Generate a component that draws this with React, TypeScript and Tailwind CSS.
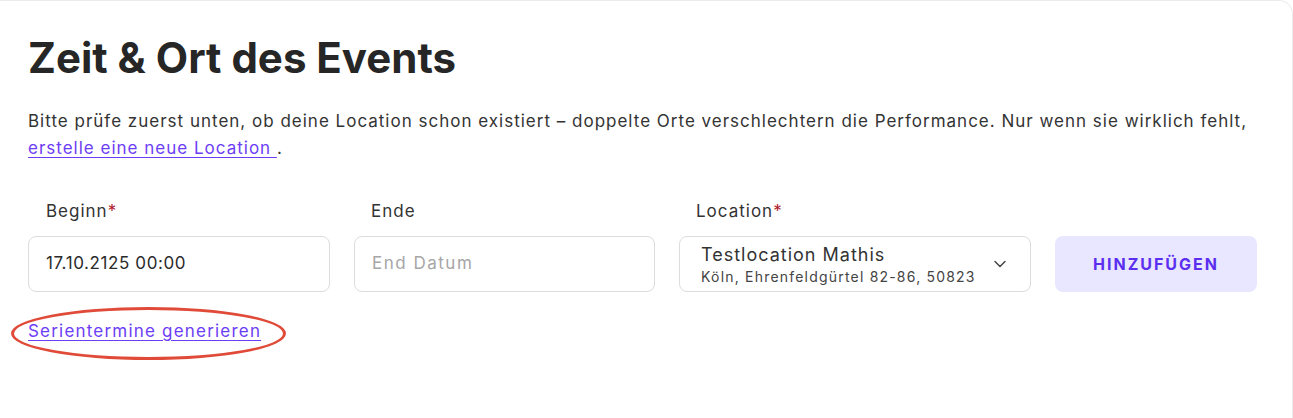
import { ChevronDown } from "lucide-react";

export default function App() {
  return (
    <div className="w-[1293px] h-[418px] bg-white overflow-hidden font-['Inter',sans-serif] text-[#2b2b2b]">
      <div className="h-full border-t border-r border-[#ececec] rounded-tr-[14px] pl-[28px] pr-[30px] pt-[31px]">
        <h1 className="text-[42px] leading-[52px] font-bold tracking-[0px] text-[#262626]">
          Zeit &amp; Ort des Events
        </h1>
        <p className="mt-[24px] text-[17px] leading-[27px] tracking-[1px] text-[#333]">
          Bitte prüfe zuerst unten, ob deine Location schon existiert – doppelte Orte verschlechtern die Performance. Nur wenn sie wirklich fehlt,{" "}
          <a href="#" className="text-[#6d3df5] underline underline-offset-[3px]">erstelle eine neue Location </a>.
        </p>

        <div className="mt-[37px] flex gap-[24px] items-end">
          <div className="flex flex-col w-[302px]">
            <label className="pl-[18px] text-[17px] leading-[24px] tracking-[1px] text-[#333] mb-[13px]">
              Beginn<span className="text-[#b0182c]">*</span>
            </label>
            <div className="h-[56px] border border-[#dcdcdc] rounded-[8px] flex items-center px-[17px] text-[17px] tracking-[0.6px]">
              17.10.2125 00:00
            </div>
          </div>
          <div className="flex flex-col w-[301px]">
            <label className="pl-[17px] text-[17px] leading-[24px] tracking-[1px] text-[#333] mb-[13px]">Ende</label>
            <div className="h-[56px] border border-[#dcdcdc] rounded-[8px] flex items-center px-[17px] text-[17px] tracking-[1.5px] text-[#a6a6a6]">
              End Datum
            </div>
          </div>
          <div className="flex flex-col w-[352px]">
            <label className="pl-[17px] text-[17px] leading-[24px] tracking-[1px] text-[#333] mb-[13px]">
              Location<span className="text-[#b0182c]">*</span>
            </label>
            <div className="h-[56px] border border-[#dcdcdc] rounded-[8px] flex items-center justify-between pl-[21px] pr-[20px]">
              <div className="flex flex-col">
                <span className="text-[18px] leading-[24px] tracking-[1px] text-[#333]">Testlocation Mathis</span>
                <span className="text-[14px] leading-[19px] tracking-[1.2px] text-[#444]">Köln, Ehrenfeldgürtel 82-86, 50823</span>
              </div>
              <ChevronDown className="w-[20px] h-[20px] text-[#444]" strokeWidth={1.75} />
            </div>
          </div>
          <button className="h-[56px] w-[202px] rounded-[8px] bg-[#e9e7ff] text-[#5b2ef0] text-[16px] font-bold tracking-[2px] uppercase">
            Hinzufügen
          </button>
        </div>

        <div className="relative mt-[27px] inline-block">
          <a href="#" className="text-[17px] leading-[24px] tracking-[1.2px] text-[#6d3df5] underline underline-offset-[3px]">
            Serientermine generieren
          </a>
          <div className="absolute left-[-17px] top-[-12px] w-[275px] h-[53px] rounded-[50%] border-[3px] border-[#e04a38]" />
        </div>
      </div>
    </div>
  );
}
